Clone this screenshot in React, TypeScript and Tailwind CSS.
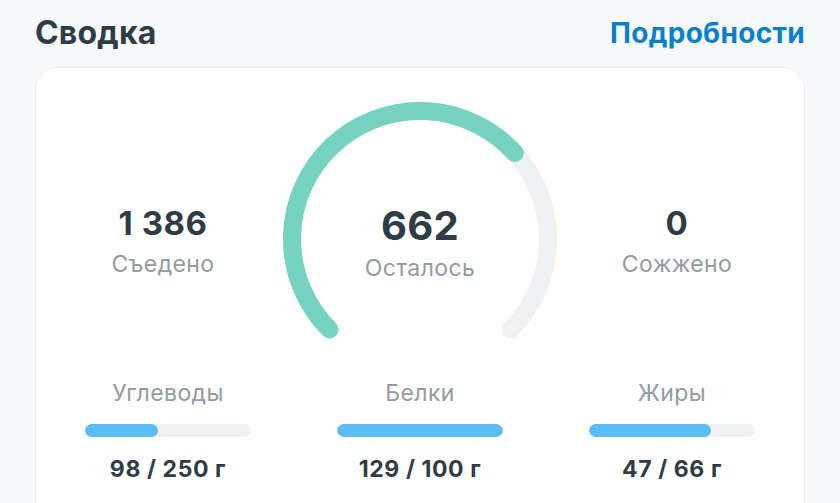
import React from 'react';

type Macro = { name: string; value: number; goal: number };

const macros: Macro[] = [
  { name: 'Углеводы', value: 98, goal: 250 },
  { name: 'Белки', value: 129, goal: 100 },
  { name: 'Жиры', value: 47, goal: 66 },
];

const eaten = 1386;
const left = 662;
const burned = 0;

const BAR_W = 166;
const BAR_H = 13;

// 270° arc, open at the bottom, filled clockwise from the lower-left end
const Gauge: React.FC<{ ratio: number }> = ({ ratio }) => {
  const cx = 140;
  const cy = 140;
  const r = 128;
  const point = (deg: number) => {
    const a = (deg * Math.PI) / 180;
    return [cx + r * Math.sin(a), cy - r * Math.cos(a)];
  };
  const arc = (from: number, to: number) => {
    const [x1, y1] = point(from);
    const [x2, y2] = point(to);
    const large = to - from > 180 ? 1 : 0;
    return `M ${x1} ${y1} A ${r} ${r} 0 ${large} 1 ${x2} ${y2}`;
  };
  const start = -135;
  const end = 135;
  const fillEnd = start + (end - start) * ratio;

  return (
    <svg width={280} height={250} viewBox="0 0 280 250">
      <path d={arc(start, end)} fill="none" stroke="#eff1f3" strokeWidth={18} strokeLinecap="round" />
      <path d={arc(start, fillEnd)} fill="none" stroke="#76d3bf" strokeWidth={18} strokeLinecap="round" />
    </svg>
  );
};

const Stat: React.FC<{ value: string; label: string }> = ({ value, label }) => (
  <div className="w-[200px] flex flex-col items-center pt-[104px]">
    <div className="text-[33px] leading-[40px] font-bold text-[#2e3c46] tracking-[0.5px]">{value}</div>
    <div className="text-[23px] leading-[30px] text-[#949b9f] mt-[6px] tracking-[0.4px]">{label}</div>
  </div>
);

export default function App() {
  return (
    <div
      className="w-[840px] h-[503px] overflow-hidden bg-[#f6f8fa] px-[35px]"
      style={{ fontFamily: 'Inter, "Noto Sans", sans-serif' }}
    >
      <div className="flex items-center justify-between h-[67px] pb-[2px]">
        <h1 className="text-[32px] font-bold text-[#2e3c46] tracking-[0.2px]">Сводка</h1>
        <a className="text-[28px] font-bold text-[#0b80c8] tracking-[0.3px]">Подробности</a>
      </div>

      <div className="bg-white rounded-[22px] border border-[#eceef1] h-[480px] pt-[31px]">
        <div className="flex justify-center gap-[17px]">
          <Stat value="1 386" label="Съедено" />
          <div className="relative w-[280px] h-[250px]">
            <Gauge ratio={eaten / (eaten + left)} />
            <div className="absolute inset-0 flex flex-col items-center pt-[104px]">
              <div className="text-[40px] leading-[46px] font-bold text-[#2e3c46] tracking-[0.3px]">{left}</div>
              <div className="text-[23px] leading-[30px] text-[#949b9f] mt-[4px] tracking-[0.4px]">Осталось</div>
            </div>
          </div>
          <Stat value={String(burned)} label="Сожжено" />
        </div>

        <div className="flex justify-center mt-[29px]">
          {macros.map((m) => {
            const fill = Math.min(1, m.value / m.goal) * (BAR_W - BAR_H) + BAR_H;
            return (
              <div key={m.name} className="w-[252px] flex flex-col items-center">
                <div className="text-[23px] leading-[30px] text-[#949b9f] tracking-[0.4px]">{m.name}</div>
                <div className="w-[166px] h-[13px] rounded-full bg-[#eff1f3] mt-[16px] overflow-hidden">
                  <div className="h-full rounded-full bg-[#5bbcf6]" style={{ width: `${fill}px` }} />
                </div>
                <div className="text-[23px] leading-[30px] font-bold text-[#2e3c46] mt-[17px] tracking-[0.6px]">
                  {m.value} / {m.goal} г
                </div>
              </div>
            );
          })}
        </div>
      </div>
    </div>
  );
}
